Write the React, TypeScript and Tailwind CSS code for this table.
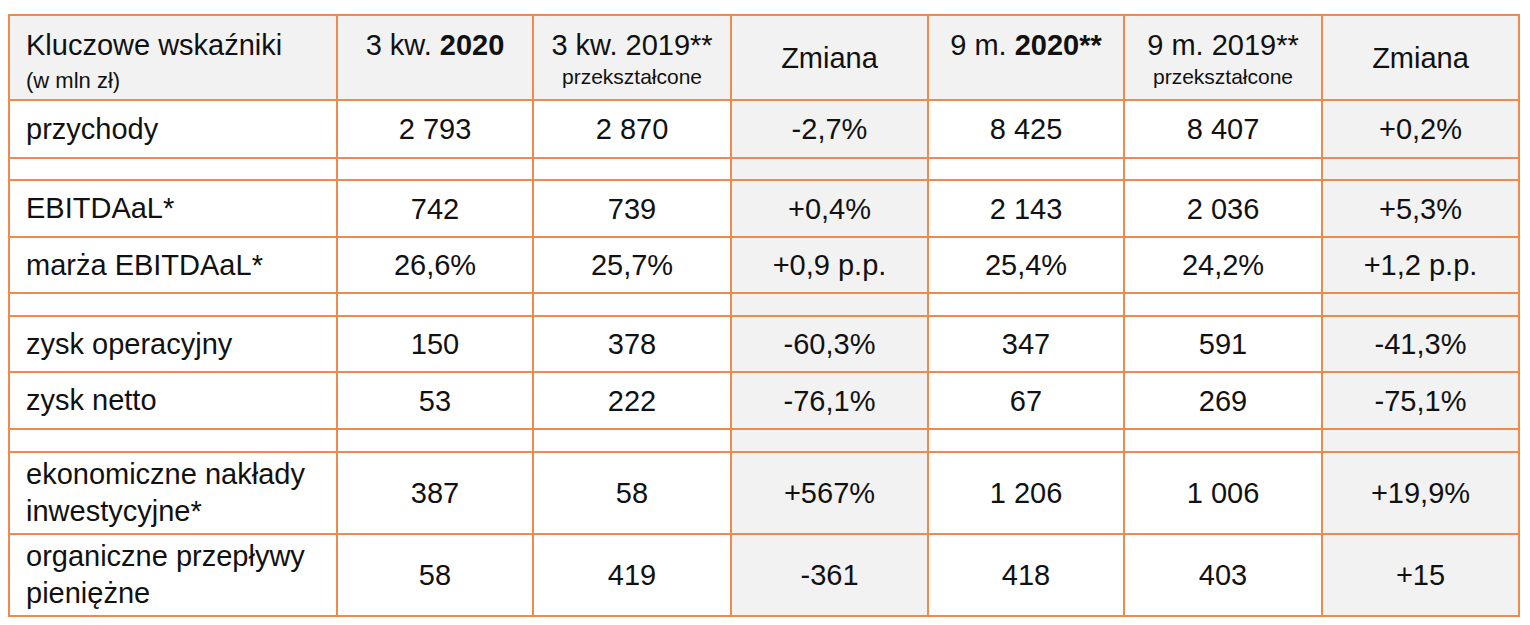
import React from 'react';

type Row = { label: React.ReactNode; v: string[]; h: string } | { spacer: true; h: string };

const rows: Row[] = [
  { label: 'przychody', v: ['2 793', '2 870', '-2,7%', '8 425', '8 407', '+0,2%'], h: 'h-[58px]' },
  { spacer: true, h: 'h-[22px]' },
  { label: 'EBITDAaL*', v: ['742', '739', '+0,4%', '2 143', '2 036', '+5,3%'], h: 'h-[57px]' },
  { label: 'marża EBITDAaL*', v: ['26,6%', '25,7%', '+0,9 p.p.', '25,4%', '24,2%', '+1,2 p.p.'], h: 'h-[56px]' },
  { spacer: true, h: 'h-[23px]' },
  { label: 'zysk operacyjny', v: ['150', '378', '-60,3%', '347', '591', '-41,3%'], h: 'h-[56px]' },
  { label: 'zysk netto', v: ['53', '222', '-76,1%', '67', '269', '-75,1%'], h: 'h-[57px]' },
  { spacer: true, h: 'h-[23px]' },
  {
    label: (
      <>
        ekonomiczne nakłady
        <br />
        inwestycyjne*
      </>
    ),
    v: ['387', '58', '+567%', '1 206', '1 006', '+19,9%'],
    h: 'h-[82px]',
  },
  {
    label: (
      <>
        organiczne przepływy
        <br />
        pieniężne
      </>
    ),
    v: ['58', '419', '-361', '418', '403', '+15'],
    h: 'h-[82px]',
  },
];

// columns 3 and 6 (index 2, 5 of values) are the grey "Zmiana" ones
const isChange = (i: number) => i === 2 || i === 5;

export default function App() {
  const cell = 'border-2 border-[#ef8a4f] p-0';

  return (
    <div className="min-h-screen bg-white pt-[14px] pl-[8px] font-['Liberation_Sans',Arial,sans-serif] text-[29px] text-[#111]">
      <table className="table-fixed border-collapse w-[1512px]">
        <colgroup>
          <col className="w-[328px]" />
          <col className="w-[196px]" />
          <col className="w-[198px]" />
          <col className="w-[197px]" />
          <col className="w-[196px]" />
          <col className="w-[198px]" />
          <col className="w-[197px]" />
        </colgroup>
        <thead>
          <tr className="h-[85px] bg-[#f2f2f2]">
            <th className={`${cell} align-top text-left font-normal pl-[16px] pt-[12px]`}>
              <div className="leading-[34px]">Kluczowe wskaźniki</div>
              <div className="text-[22px] leading-[26px] mt-[6px]">(w mln zł)</div>
            </th>
            <th className={`${cell} align-top font-normal pt-[12px]`}>
              <div className="leading-[34px]">
                3 kw. <span className="font-bold">2020</span>
              </div>
            </th>
            <th className={`${cell} align-top font-normal pt-[12px]`}>
              <div className="leading-[34px]">3 kw. 2019**</div>
              <div className="text-[21px] leading-[24px] mt-[3px]">przekształcone</div>
            </th>
            <th className={`${cell} align-middle font-normal leading-[34px]`}>Zmiana</th>
            <th className={`${cell} align-top font-normal pt-[12px]`}>
              <div className="leading-[34px]">
                9 m. <span className="font-bold">2020**</span>
              </div>
            </th>
            <th className={`${cell} align-top font-normal pt-[12px]`}>
              <div className="leading-[34px]">9 m. 2019**</div>
              <div className="text-[21px] leading-[24px] mt-[3px]">przekształcone</div>
            </th>
            <th className={`${cell} align-middle font-normal leading-[34px]`}>Zmiana</th>
          </tr>
        </thead>
        <tbody>
          {rows.map((r, ri) =>
            'spacer' in r ? (
              <tr key={ri} className={r.h}>
                <td className={cell}></td>
                {[0, 1, 2, 3, 4, 5].map((i) => (
                  <td key={i} className={`${cell} ${isChange(i) ? 'bg-[#f2f2f2]' : ''}`}></td>
                ))}
              </tr>
            ) : (
              <tr key={ri} className={r.h}>
                <td className={`${cell} pl-[16px] align-middle leading-[37px]`}>{r.label}</td>
                {r.v.map((val, i) => (
                  <td
                    key={i}
                    className={`${cell} text-center align-middle leading-[34px] whitespace-nowrap ${
                      isChange(i) ? 'bg-[#f2f2f2]' : ''
                    }`}
                  >
                    {val}
                  </td>
                ))}
              </tr>
            )
          )}
        </tbody>
      </table>
    </div>
  );
}
